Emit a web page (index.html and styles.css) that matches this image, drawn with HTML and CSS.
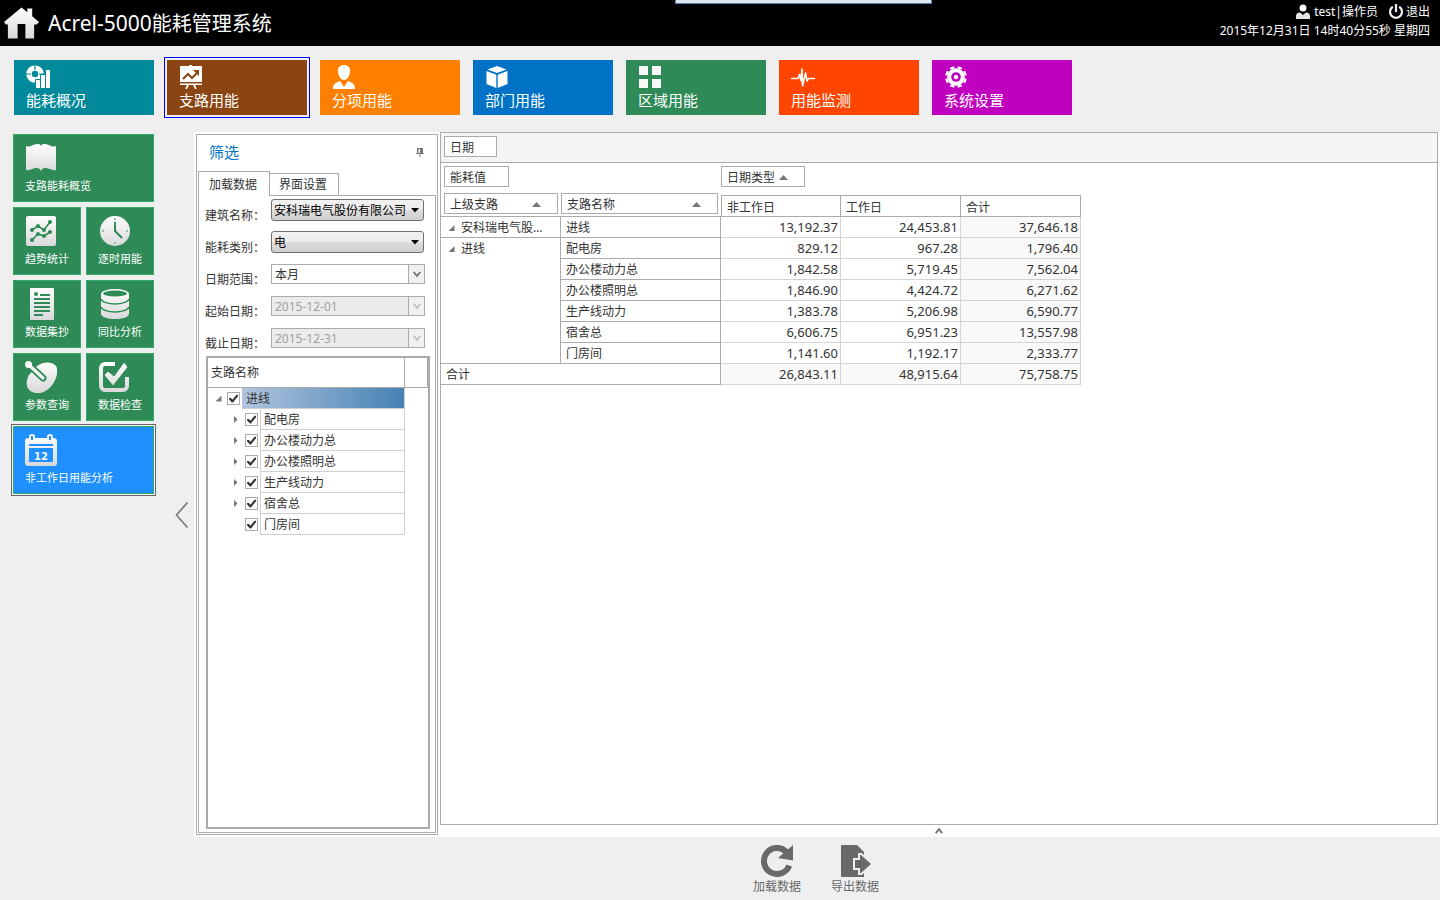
FILE: index.html
```html
<!DOCTYPE html>
<html lang="zh-CN">
<head>
<meta charset="utf-8">
<title>Acrel-5000能耗管理系统</title>
<link rel="stylesheet" href="styles.css">
</head>
<body>
<svg class="defs" aria-hidden="true"><defs>
<linearGradient id="silver" gradientUnits="userSpaceOnUse" x1="0" y1="0" x2="0" y2="32"><stop offset="0" stop-color="#fff"/><stop offset="1" stop-color="#d8d8d8"/></linearGradient>
</defs></svg>

<header class="topbar">
  <svg class="home" viewBox="0 0 36 32"><path fill="url(#silver)" d="M18 0 24 5V1h5v8l7 6-2.500 2.500H31V32h-9V17h-8v15H4V17.500H2L0 15z"/></svg>
  <h1><span class="latin">Acrel-5000</span>能耗管理系统</h1>
  <div class="dock"></div>
  <div class="session">
    <div class="session-row">
      <svg class="user" viewBox="0 0 14 16"><circle cx="7" cy="4" r="3.500" fill="#fff"/><path fill="#e4e4e4" d="M0 15v-3c0-2.500 2-3.500 4-3.500l3 2.500 3-2.500c2 0 4 1 4 3.500v3z"/></svg>
      <span>test|操作员</span>
      <button class="logout" type="button"><svg viewBox="0 0 16 16" fill="none" stroke="#eee" stroke-width="2.200"><path d="M4.800 2.800a6 6 0 1 0 6.400 0M8 0v8"/></svg>退出</button>
    </div>
    <time>2015年12月31日 14时40分55秒 星期四</time>
  </div>
</header>

<nav class="modules">
  <button type="button" class="module teal"><svg viewBox="0 0 24 24"><path fill="none" stroke="#fff" stroke-width="5.500" d="M9 9m-6 0a6 6 0 1 1 12 0a6 6 0 1 1-12 0"/><path stroke="#00899b" stroke-width="1.200" d="M9 0v5M0 9h5M13 9h5"/><path fill="#fff" stroke="#00899b" d="M9.500 14.500h5v9h-5zM14.500 9.500h5v14h-5zM19.500 4.500h5v19h-5z"/></svg>能耗概况</button>
  <button type="button" class="module brown selected"><svg viewBox="0 0 24 24"><path fill="#fff" d="M10 0h3v1h10v16H1V1h9zM1 18.500h22V20H1z"/><path stroke="#fff" stroke-width="1.800" d="m9 20-2 4M15 20l2 4"/><path fill="none" stroke="#8b4513" stroke-width="2" d="m4 14 5-5 4 4 5-5"/><path fill="#8b4513" d="M14 5h6v6z"/></svg>支路用能</button>
  <button type="button" class="module orange"><svg viewBox="0 0 24 24"><path fill="#fff" d="M12 0c4 0 6.500 2.500 6 6.500-.3 4-2.500 8.500-6 8.500S6.300 10.500 6 6.500C5.500 2.500 8 0 12 0zM1 24c0-5 2-6 7-8l4 6 4-6c5 2 7 3 7 8z"/></svg>分项用能</button>
  <button type="button" class="module blue"><svg viewBox="0 0 24 24"><path fill="#fff" d="m12 1 9.500 3.500L12 8 2.500 4.500zM1.500 6l9.800 3.700V23L1.500 19zM22.500 6l-9.800 3.700V23l9.800-4z"/></svg>部门用能</button>
  <button type="button" class="module green"><svg viewBox="0 0 24 24"><path fill="#f8f8f8" d="M1 1h9v9H1zM14 1h9v9h-9zM1 14h9v9H1zM14 14h9v9h-9z"/></svg>区域用能</button>
  <button type="button" class="module red"><svg viewBox="0 0 24 24"><path fill="none" stroke="#fff" stroke-width="1.600" stroke-linejoin="round" d="M0 13.500h7l1.500-4 1.500 6L11 4l.5 17 3-13 1.500 8 1.500-2.500H24"/></svg>用能监测</button>
  <button type="button" class="module purple"><svg viewBox="0 0 24 24"><circle cx="12" cy="12" r="6.800" fill="none" stroke="#fff" stroke-width="4"/><path stroke="#fff" stroke-width="4.500" d="M8.700 4 7.900 2M15.300 4l.8-2M20 8.700l2-.8M20 15.300l2 .8M15.300 20l.8 2M8.700 20l-.8 2M4 15.300l-2 .8M4 8.700l-2-.8"/><circle cx="12" cy="12" r="2.200" fill="#fff"/></svg>系统设置</button>
</nav>

<div class="main">
  <aside class="side">
    <div class="tiles">
      <button type="button" class="tile wide"><svg viewBox="0 0 32 32"><path fill="url(#silver)" d="M1 4c4 2 7-2 11-2 2 0 3 0 4 2 1-2 2-2 4-2 4 0 7 4 11 2v24c-4 1-7-2-11-2-2 0-3 1-4 3-1-2-2-3-4-3-4 0-7 3-11 2z"/></svg>支路能耗概览</button>
      <button type="button" class="tile"><svg viewBox="0 0 32 32"><rect x="1" y="1" width="30" height="30" rx="2" fill="url(#silver)"/><g fill="none" stroke="#2e8b57" stroke-width="1.600"><path d="m7 15 6-4 6 4 6-8M7 25l6-6 6 2 6-4"/></g><g fill="#2e8b57"><circle cx="7" cy="15" r="2"/><circle cx="13" cy="11" r="2"/><circle cx="19" cy="15" r="2"/><circle cx="25" cy="7" r="2"/><circle cx="7" cy="25" r="2"/><circle cx="13" cy="19" r="2"/><circle cx="19" cy="21" r="2"/><circle cx="25" cy="17" r="2"/></g></svg>趋势统计</button>
      <button type="button" class="tile"><svg viewBox="0 0 32 32"><circle cx="17" cy="16" r="15" fill="url(#silver)"/><path fill="none" stroke="#2e8b57" stroke-width="2" d="M17 7v9l7 7"/><path fill="#8fc3a5" d="M16 3h2v2h-2zM16 27h2v2h-2zM4 15h2v2H4zM28 15h2v2h-2z"/></svg>逐时用能</button>
      <button type="button" class="tile"><svg viewBox="0 0 32 32"><rect x="5" width="24" height="32" rx="1" fill="url(#silver)"/><circle cx="11" cy="6" r="2" fill="#2e8b57"/><path stroke="#2e8b57" stroke-width="1.800" d="M15 7h10M9 11h16M9 15h16M9 19h16M9 23h16M9 27h9"/></svg>数据集抄</button>
      <button type="button" class="tile"><svg viewBox="0 0 32 32"><path fill="url(#silver)" d="M3 6c0-3 7-5 14-5s14 2 14 5v20c0 3-7 5-14 5S3 29 3 26z"/><ellipse cx="17" cy="5.500" rx="12" ry="3" fill="#2e8b57"/><path fill="none" stroke="#2e8b57" stroke-width="1.400" d="M3 11c1 3 7 5 14 5s13-2 14-5M3 19c1 3 7 5 14 5s13-2 14-5"/></svg>同比分析</button>
      <button type="button" class="tile"><svg viewBox="0 0 32 32"><path fill="url(#silver)" d="M12 5c8-6 18-4 20 2 2 8-6 25-19 25C2 32-1 23 4 14z"/><path stroke="#2e8b57" stroke-width="7" stroke-linecap="round" d="m4 4 14 13"/><path stroke="#f3f3f3" stroke-width="3.200" stroke-linecap="round" d="m4 4 14 13"/><circle cx="3.500" cy="3.500" r="3.500" fill="#fff"/></svg>参数查询</button>
      <button type="button" class="tile"><svg viewBox="0 0 32 32"><path fill="none" stroke="url(#silver)" stroke-width="4" d="M17 3H7a4 4 0 0 0-4 4v18a4 4 0 0 0 4 4h18a4 4 0 0 0 4-4V16"/><path fill="url(#silver)" stroke="#2e8b57" d="m6 14 4-4 6 5L26 1l4 5-15 19z"/></svg>数据检查</button>
      <button type="button" class="tile wide current"><svg viewBox="0 0 32 32"><path fill="url(#silver)" d="M0 7c0-2 1-3 4-3V2c0-2.500 6-2.500 6 0v2h12V2c0-2.500 6-2.500 6 0v2c3 0 4 1 4 3v22c0 2-1 3-3 3H3c-2 0-3-1-3-3z"/><path fill="#1e90ff" d="M6 2h2v4H6zM24 2h2v4h-2zM4 10h24v2H4zM4 14h24v14H4z"/><text x="16" y="26" text-anchor="middle" class="day">12</text></svg>非工作日用能分析</button>
    </div>
    <button type="button" class="fold" aria-label="收起"><svg viewBox="0 0 14 26"><path fill="none" stroke="#808080" stroke-width="1.800" d="M12.500.500 1.500 13l11 12.500"/></svg></button>
  </aside>

  <section class="content">
    <div class="workspace">
      <section class="filter">
        <div class="filter-head"><h2>筛选</h2><button type="button" aria-label="固定"><svg viewBox="0 0 8 9"><path fill="#777" d="M1 0h6v5h1v1H4.500v3h-1V6H0V5h1z"/><path fill="#fff" d="M2.500 1h1.500v4H2.500z"/></svg></button></div>
        <div class="tabs"><button type="button" class="tab active">加载数据</button><button type="button" class="tab">界面设置</button></div>
        <div class="tab-body">
          <form class="fields">
            <label for="building">建筑名称：</label>
            <div class="combo glossy"><select id="building"><option>安科瑞电气股份有限公司</option></select><svg viewBox="0 0 8 5"><path d="M0 0h8L4 4.500z"/></svg></div>
            <label for="energy">能耗类别：</label>
            <div class="combo glossy"><select id="energy"><option>电</option></select><svg viewBox="0 0 8 5"><path d="M0 0h8L4 4.500z"/></svg></div>
            <label for="range">日期范围：</label>
            <div class="combo flat"><select id="range"><option>本月</option></select><span class="drop"><svg viewBox="0 0 8 7"><path d="m.8 1 3.200 4 3.200-4"/></svg></span></div>
            <label for="from">起始日期：</label>
            <div class="combo flat off"><input id="from" type="text" value="2015-12-01" disabled><span class="drop"><svg viewBox="0 0 8 7"><path d="m.8 1 3.200 4 3.200-4"/></svg></span></div>
            <label for="to">截止日期：</label>
            <div class="combo flat off"><input id="to" type="text" value="2015-12-31" disabled><span class="drop"><svg viewBox="0 0 8 7"><path d="m.8 1 3.200 4 3.200-4"/></svg></span></div>
          </form>
          <div class="tree">
            <div class="tree-head"><span>支路名称</span></div>
            <ul>
              <li class="node root"><button type="button" class="toggle open" aria-label="折叠"></button><input type="checkbox" id="n0" checked><label for="n0">进线</label></li>
              <li class="node"><button type="button" class="toggle" aria-label="展开"></button><input type="checkbox" id="n1" checked><label for="n1">配电房</label></li>
              <li class="node"><button type="button" class="toggle" aria-label="展开"></button><input type="checkbox" id="n2" checked><label for="n2">办公楼动力总</label></li>
              <li class="node"><button type="button" class="toggle" aria-label="展开"></button><input type="checkbox" id="n3" checked><label for="n3">办公楼照明总</label></li>
              <li class="node"><button type="button" class="toggle" aria-label="展开"></button><input type="checkbox" id="n4" checked><label for="n4">生产线动力</label></li>
              <li class="node"><button type="button" class="toggle" aria-label="展开"></button><input type="checkbox" id="n5" checked><label for="n5">宿舍总</label></li>
              <li class="node leaf"><input type="checkbox" id="n6" checked><label for="n6">门房间</label></li>
            </ul>
          </div>
        </div>
      </section>

      <section class="result">
        <div class="pivot">
          <div class="pivot-filter"><button type="button" class="chip date">日期</button></div>
          <table>
            <colgroup><col class="c-parent"><col class="c-branch"><col class="c-val"><col class="c-val"><col class="c-val"></colgroup>
            <thead>
              <tr class="areas"><th colspan="2"><button type="button" class="chip measure">能耗值</button></th><th colspan="3"><button type="button" class="chip kind">日期类型<i class="sort"></i></button></th></tr>
              <tr class="heads"><th class="rowhead"><button type="button" class="chip">上级支路<i class="sort"></i></button></th><th class="rowhead second"><button type="button" class="chip">支路名称<i class="sort"></i></button></th><th class="colhead first"><div>非工作日</div></th><th class="colhead"><div>工作日</div></th><th class="colhead"><div>合计</div></th></tr>
            </thead>
            <tbody>
              <tr><th><span class="group"><button type="button" class="toggle open" aria-label="折叠"></button>安科瑞电气股…</span></th><th>进线</th><td>13,192.37</td><td>24,453.81</td><td>37,646.18</td></tr>
              <tr><th rowspan="6" class="span"><span class="group"><button type="button" class="toggle open" aria-label="折叠"></button>进线</span></th><th>配电房</th><td>829.12</td><td>967.28</td><td>1,796.40</td></tr>
              <tr><th>办公楼动力总</th><td>1,842.58</td><td>5,719.45</td><td>7,562.04</td></tr>
              <tr><th>办公楼照明总</th><td>1,846.90</td><td>4,424.72</td><td>6,271.62</td></tr>
              <tr><th>生产线动力</th><td>1,383.78</td><td>5,206.98</td><td>6,590.77</td></tr>
              <tr><th>宿舍总</th><td>6,606.75</td><td>6,951.23</td><td>13,557.98</td></tr>
              <tr><th>门房间</th><td>1,141.60</td><td>1,192.17</td><td>2,333.77</td></tr>
            </tbody>
            <tfoot><tr><th colspan="2">合计</th><td>26,843.11</td><td>48,915.64</td><td>75,758.75</td></tr></tfoot>
          </table>
        </div>
        <button type="button" class="splitter" aria-label="展开"><svg viewBox="0 0 8 6"><path fill="none" stroke="#777" stroke-width="2" d="m.8 5.200 3.200-4 3.200 4"/></svg></button>
      </section>
    </div>
    <footer class="actions">
      <button type="button"><svg viewBox="0 0 32 32"><path fill="none" stroke="#696969" stroke-width="6" d="M25.200 6.800A13 13 0 1 0 28.200 20.400"/><path fill="#696969" d="M32 0v15.500L17 13z"/></svg>加载数据</button>
      <button type="button"><svg viewBox="0 0 32 32"><path fill="#696969" d="M2 1q0-1 1-1h15l7 7v25H3q-1 0-1-1z"/><path fill="#696969" stroke="#efefef" stroke-width="4" paint-order="stroke" d="M16 15h5v-5h1l10 9-10 9h-1v-5h-5z"/></svg>导出数据</button>
    </footer>
  </section>
</div>
</body>
</html>
```
FILE: styles.css
```css
* { box-sizing: border-box; }

body {
  margin: 0;
  min-height: 100vh;
  display: flex;
  flex-direction: column;
  background: #efefef;
  color: #333;
  font: 12px/16px "Noto Sans", "Noto Sans CJK SC", sans-serif;
}

button, input, select { font: inherit; color: inherit; }
button { padding: 0; border: 0; background: none; text-align: left; cursor: pointer; }
svg { display: block; flex: none; }
h1, h2, ul { margin: 0; padding: 0; font-weight: normal; }
ul { list-style: none; }
.defs { position: absolute; width: 0; height: 0; }

/* Top bar */
.topbar {
  position: relative;
  display: flex;
  align-items: center;
  height: 46px;
  padding: 0 10px 0 4px;
  background: #000;
  color: #fff;
}
.home { width: 35px; height: 32px; }
.topbar h1 { margin-left: 9px; font-size: 20px; line-height: 28px; }
.latin { font-size: 21px; }
.dock {
  position: absolute;
  top: 0;
  left: 675px;
  width: 257px;
  height: 4px;
  background: #dce6ee;
  border: 1px solid #5b7dae;
  border-top: 0;
}
.session { align-self: flex-start; margin-left: auto; padding-top: 2px; text-align: right; line-height: 19px; }
.session-row { display: flex; justify-content: flex-end; align-items: center; height: 19px; gap: 4px; }
.session time { display: block; }
.user { width: 14px; height: 16px; }
.logout { display: flex; align-items: center; gap: 2px; margin-left: 6px; }
.logout svg { width: 16px; height: 16px; }

/* Module tiles */
.modules { display: flex; gap: 13px; padding: 14px; height: 86px; }
.module {
  display: flex;
  flex-direction: column;
  width: 140px;
  height: 55px;
  padding: 5px 12px 0;
  color: #fff;
  font-size: 15px;
  line-height: 22px;
}
.module svg { width: 24px; height: 24px; }
.teal { background: #00899b; }
.brown { background: #8b4513; }
.orange { background: #ff8000; }
.blue { background: #0072c6; }
.green { background: #2e8b57; }
.red { background: #ff4500; }
.purple { background: #bf00bf; }
.selected { outline: 1px solid #0000ff; outline-offset: 2px; }

.main { flex: 1; display: flex; }

/* Side tiles */
.side { display: flex; width: 194px; flex: none; padding: 2px 5px 4px 13px; justify-content: space-between; }
.tiles { display: grid; grid-template-columns: 68px 68px; grid-auto-rows: 68px; gap: 5px; }
.tile {
  display: flex;
  flex-direction: column;
  padding: 7px 11px 0;
  border: 1px solid #32a866;
  background: #2e8b57;
  color: #fff;
  font-size: 11px;
  line-height: 18px;
  white-space: nowrap;
}
.tile svg { width: 32px; height: 32px; margin-bottom: 3px; }
.wide { grid-column: span 2; width: 141px; }
.current { background: #1e90ff; outline: 1px solid #666; outline-offset: 1px; box-shadow: 0 0 0 1px #fff; }
.day { fill: #f4f4f4; font: bold 10px "DejaVu Sans", sans-serif; }
.fold { align-self: center; }
.fold svg { width: 14px; height: 26px; }

/* Workspace */
.content { flex: 1; min-width: 0; display: flex; flex-direction: column; }
.workspace { flex: 1; display: flex; gap: 2px; padding: 0 2px; background: #fff; }

.filter {
  width: 242px;
  flex: none;
  display: flex;
  flex-direction: column;
  margin: 2px 0;
  padding: 1px;
  border: 1px solid #ababab;
}
.filter-head { display: flex; justify-content: space-between; align-items: center; height: 35px; padding: 0 12px 3px 11px; }
.filter-head h2 { color: #0072c6; font-size: 15px; line-height: 22px; }
.filter-head svg { width: 8px; height: 9px; }
.tabs { display: flex; align-items: flex-end; height: 24px; }
.tab { width: 69px; height: 22px; padding: 1px 0 0 9px; border: 1px solid #ababab; border-width: 1px 1px 0 0; }
.tab.active { z-index: 1; width: 72px; height: 25px; margin-bottom: -1px; padding-left: 10px; border-left-width: 1px; background: #fff; }
.tab-body { flex: 1; display: flex; flex-direction: column; border: 1px solid #ababab; padding-top: 3px; }

.fields { display: grid; grid-template-columns: 66px 154px; grid-auto-rows: 22px; row-gap: 10px; padding-left: 6px; align-items: center; }
.fields label { margin-top: 12px; white-space: nowrap; }
.combo { position: relative; }
.combo select, .combo input { display: block; width: 100%; appearance: none; outline: 0; border-radius: 0; }
.glossy { height: 22px; width: 153px; }
.glossy select {
  height: 22px;
  padding: 1px 16px 0 2px;
  border: 1px solid #707070;
  border-radius: 3px;
  background: linear-gradient(#f2f2f2, #ebebeb 50%, #dddddd 51%, #cfcfcf);
  color: #000;
}
.glossy svg { position: absolute; right: 5px; top: 9px; width: 8px; height: 5px; pointer-events: none; }
.flat select, .flat input { height: 20px; padding: 1px 18px 0 3px; border: 1px solid #ababab; background: #fff; }
.flat input:disabled { background: #ebebeb; color: #a0a0a0; opacity: 1; }
.drop {
  position: absolute;
  inset: 1px 1px 1px auto;
  width: 16px;
  display: grid;
  place-items: center;
  border-left: 1px solid #ababab;
  background: #f0f0f0;
  pointer-events: none;
}
.drop svg { width: 8px; height: 7px; fill: none; stroke: #777; stroke-width: 2; }
.off .drop svg { stroke: #c0c0c0; }

.tree { flex: 1; margin: 7px 5px 3px 7px; border: 2px solid #ababab; }
.tree-head { height: 30px; padding-left: 3px; border: 1px solid #ababab; border-width: 0 1px 1px 0; line-height: 30px; }
.tree-head span { display: block; width: 194px; border-right: 1px solid #ababab; }
.node { display: flex; align-items: center; height: 21px; width: 197px; padding-left: 24px; }
.root { padding-left: 6px; }
.leaf { padding-left: 37px; }
.node label { flex: 1; height: 21px; margin-left: 2px; padding-left: 3px; border: 1px solid #d0d0d0; border-width: 0 1px 1px 1px; line-height: 22px; }
.root label { background: linear-gradient(90deg, #b0c4de, #4682b4); border-left: 0; padding-left: 4px; }
.node input { appearance: none; width: 13px; height: 13px; margin: 0; border: 1px solid #ababab; background: #fff; display: grid; place-items: center; }
.node input:checked::before {
  content: "";
  width: 9px;
  height: 9px;
  background: #333;
  clip-path: polygon(0 44%, 22% 44%, 38% 64%, 84% 8%, 100% 8%, 100% 24%, 44% 94%, 32% 94%, 0 58%);
}
.toggle { flex: none; width: 13px; height: 13px; display: grid; place-items: center; }
.toggle::before { content: ""; width: 4px; height: 8px; margin-right: 6px; background: #777; clip-path: polygon(0 0, 100% 50%, 0 100%); }
.toggle.open::before { width: 6px; height: 6px; margin-right: 2px; clip-path: polygon(100% 0, 100% 100%, 0 100%); }
.root .toggle.open::before { margin-right: 4px; }

/* Pivot grid */
.result { flex: 1; min-width: 0; display: flex; flex-direction: column; }
.pivot { flex: 1; border: 1px solid #ababab; }
.pivot-filter { height: 30px; padding: 3px; background: #f5f5f5; border-bottom: 1px solid #ababab; }
.chip {
  display: flex;
  align-items: center;
  justify-content: space-between;
  width: 100%;
  height: 21px;
  padding: 2px 16px 0 5px;
  border: 1px solid #ababab;
  background: #fff;
}
.chip.date { width: 53px; }
.chip.measure { width: 65px; }
.chip.kind { width: 84px; }
.sort { width: 9px; height: 5px; background: #777; clip-path: polygon(50% 0, 100% 100%, 0 100%); }

table { width: 640px; table-layout: fixed; border-collapse: separate; border-spacing: 0; }
.c-parent, .c-val { width: 120px; }
.c-branch { width: 160px; }
th, td { height: 21px; padding: 0; border: 0 solid #ababab; border-width: 0 1px 1px 0; font-weight: normal; line-height: 20px; }
th { text-align: left; white-space: nowrap; padding: 2px 0 0 5px; line-height: 18px; }
td { border-color: #d4d4d4; padding-right: 2px; text-align: right; font-size: 13px; }
td:last-child, tfoot td { background: #f9f9f9; }
.areas th { height: 30px; padding: 3px 0 0; border: 0; vertical-align: top; }
.areas th:first-child { padding-left: 3px; }
.heads th { height: 24px; }
.heads .rowhead { padding: 0 3px; border-right: 0; vertical-align: top; }
.heads .second { padding-left: 0; }
.heads .colhead { padding: 2px 0 0; border-right: 0; }
.colhead div { height: 21px; padding-left: 5px; border: 1px solid #ababab; border-width: 1px 1px 0 0; line-height: 23px; }
.colhead.first div { border-left-width: 1px; }
.span { vertical-align: top; }
.group { display: flex; align-items: center; gap: 2px; }

.splitter { display: grid; place-items: center; height: 12px; }
.splitter svg { width: 8px; height: 6px; }

/* Bottom actions */
.actions { display: flex; justify-content: center; gap: 30px; height: 63px; padding: 8px 2px 0 0; color: #696969; }
.actions button { display: flex; flex-direction: column; align-items: center; height: 52px; line-height: 20px; }
.actions svg { width: 32px; height: 32px; }
```
